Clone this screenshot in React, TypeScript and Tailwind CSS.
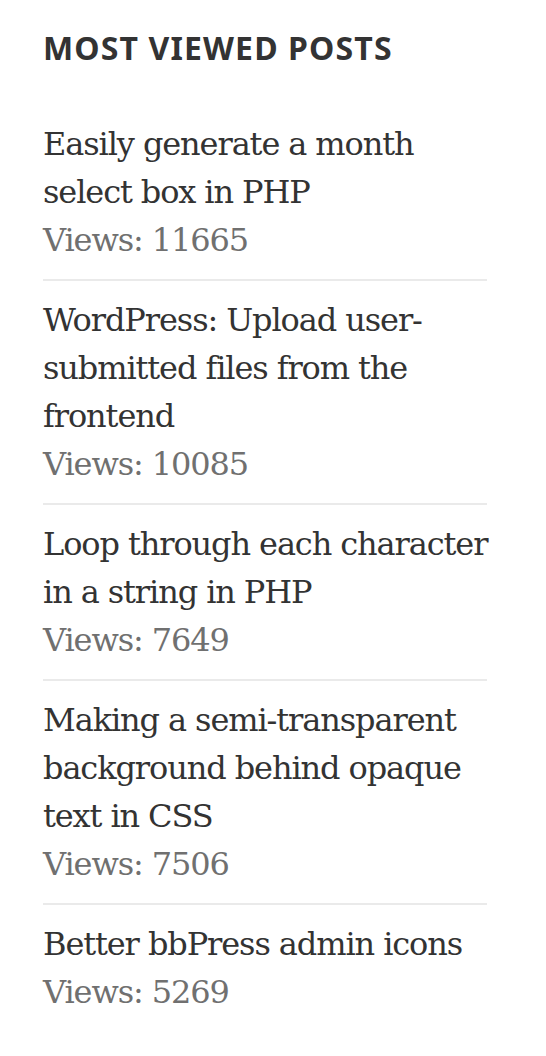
const posts = [
  { title: "Easily generate a month select box in PHP", views: 11665 },
  { title: "WordPress: Upload user-submitted files from the frontend", views: 10085 },
  { title: "Loop through each character in a string in PHP", views: 7649 },
  { title: "Making a semi-transparent background behind opaque text in CSS", views: 7506 },
  { title: "Better bbPress admin icons", views: 5269 },
];

export default function App() {
  return (
    <div className="min-h-screen bg-white">
      <aside className="w-[444px] ml-[43px] pt-6">
        {/* Widget title */}
        <h2 className="font-['Noto_Sans',sans-serif] text-[32px] font-bold uppercase leading-[48px] tracking-[0.035em] text-[#333333]">
          Most Viewed Posts
        </h2>

        {/* Post list */}
        <ul className="mt-12 font-['DejaVu_Serif',serif] text-[32px] leading-[48px] tracking-[-1.1px] text-[#333333]">
          {posts.map((post, index) => (
            <li
              key={post.title}
              className={index === 0 ? "pb-[15px]" : "border-t-2 border-[#eaeaea] pt-[15px] pb-[15px]"}
            >
              <a href="#" className="block w-[450px]">{post.title}</a>
              <div className="text-[#707070]">Views: {post.views}</div>
            </li>
          ))}
        </ul>
      </aside>
    </div>
  );
}
